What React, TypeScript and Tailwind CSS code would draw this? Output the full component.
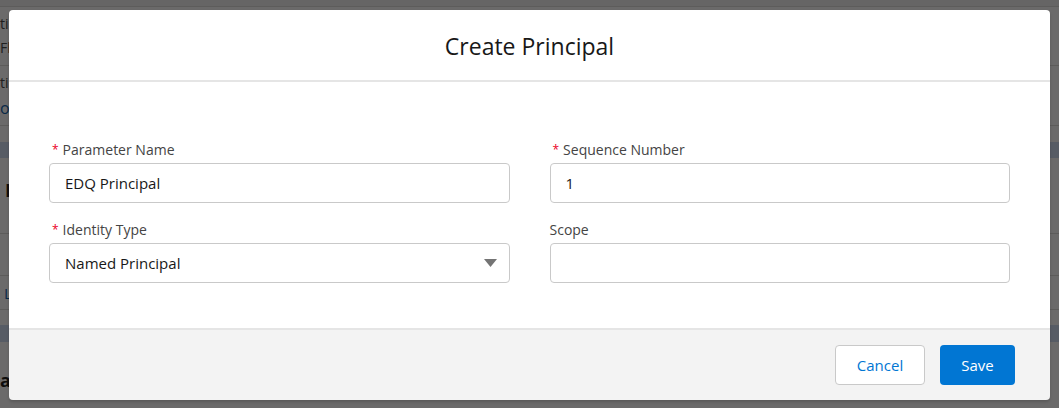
import React from 'react';

const Required: React.FC = () => (
  <abbr title="required" className="no-underline text-[#ea001e] text-[12px] ml-[3px] mr-[4px] align-top">
    *
  </abbr>
);

const Field: React.FC<{ label: string; required?: boolean; children: React.ReactNode }> = ({
  label,
  required,
  children,
}) => (
  <div className="flex flex-col">
    <label className="flex items-start text-[14px] leading-[18px] text-[#444444] mb-[4px]">
      {required && <Required />}
      <span>{label}</span>
    </label>
    {children}
  </div>
);

const TextInput: React.FC<{ value: string }> = ({ value }) => (
  <input
    readOnly
    value={value}
    className="h-[40px] w-full border border-[#c9c9c9] rounded-[4px] bg-white pl-[15px] text-[15px] text-[#181818] outline-none"
  />
);

const App: React.FC = () => {
  return (
    <div className="relative w-[1059px] h-[408px] overflow-hidden bg-white font-['Open_Sans','Liberation_Sans',sans-serif]">
      {/* page behind the modal */}
      <div className="flex flex-col text-[14px] text-[#444444]">
        <div className="h-[7px] bg-[#f3f3f3] border-b border-[#dddbda]" />
        <div className="h-[59px] flex flex-col justify-center gap-[6px] border-b border-[#dddbda]">
          <span className="leading-[18px]">ti</span>
          <span className="leading-[18px]">Fl</span>
        </div>
        <div className="h-[60px] flex flex-col justify-center gap-[6px] border-b border-[#dddbda]">
          <span className="leading-[18px]">ti</span>
          <span className="leading-[20px] text-[16px] text-[#0b5cab]">ol</span>
        </div>
        <div className="h-[16px]" />
        <div className="h-[16px] bg-[#ccdcf3]" />
        <div className="h-[76px] flex items-center border-b border-[#dddbda] pl-[5px] pb-[10px]">
          <span className="text-[18px] font-bold text-[#181818]">I</span>
        </div>
        <div className="h-[42px] border-b border-[#dddbda]" />
        <div className="h-[34px] flex items-center border-b border-[#dddbda] pl-[4px] pt-[2px]">
          <span className="text-[15px] text-[#0b5cab]">L</span>
        </div>
        <div className="h-[15px]" />
        <div className="h-[17px] bg-[#ccdcf3]" />
        <div className="h-[66px] flex items-center pt-[10px]">
          <span className="text-[18px] font-bold text-[#181818]">al</span>
        </div>
      </div>

      {/* backdrop */}
      <div className="absolute inset-0 bg-[#080707]/60" />

      {/* modal */}
      <div className="absolute left-[9px] top-[10px] w-[1041px] flex flex-col rounded-[4px] overflow-hidden shadow-[0_2px_3px_rgba(0,0,0,0.16)]">
        <header className="h-[72px] flex items-center justify-center bg-white border-b-2 border-[#e5e5e5] pt-[2px]">
          <h2 className="text-[23px] leading-[30px] text-[#181818]">Create Principal</h2>
        </header>

        <div className="bg-white px-[40px] pt-[59px] pb-[45px]">
          <div className="grid grid-cols-2 gap-x-[40px] gap-y-[18px]">
            <Field label="Parameter Name" required>
              <TextInput value="EDQ Principal" />
            </Field>
            <Field label="Sequence Number" required>
              <TextInput value="1" />
            </Field>
            <Field label="Identity Type" required>
              <button
                type="button"
                className="h-[40px] w-full flex items-center justify-between border border-[#c9c9c9] rounded-[4px] bg-white pl-[15px] pr-[12px] text-[15px] text-[#181818]"
              >
                <span>Named Principal</span>
                <svg width="13" height="8" viewBox="0 0 13 8">
                  <polygon points="0,0 13,0 6.5,8" fill="#747474" />
                </svg>
              </button>
            </Field>
            <Field label="Scope">
              <TextInput value="" />
            </Field>
          </div>
        </div>

        <footer className="h-[72px] flex items-center justify-end gap-[15px] bg-[#f3f3f3] border-t-2 border-[#e5e5e5] pr-[35px]">
          <button
            type="button"
            className="w-[90px] h-[40px] rounded-[4px] border border-[#c9c9c9] bg-white text-[15px] text-[#0176d3]"
          >
            Cancel
          </button>
          <button
            type="button"
            className="w-[75px] h-[40px] rounded-[4px] bg-[#0176d3] text-[15px] text-white"
          >
            Save
          </button>
        </footer>
      </div>
    </div>
  );
};

export default App;
